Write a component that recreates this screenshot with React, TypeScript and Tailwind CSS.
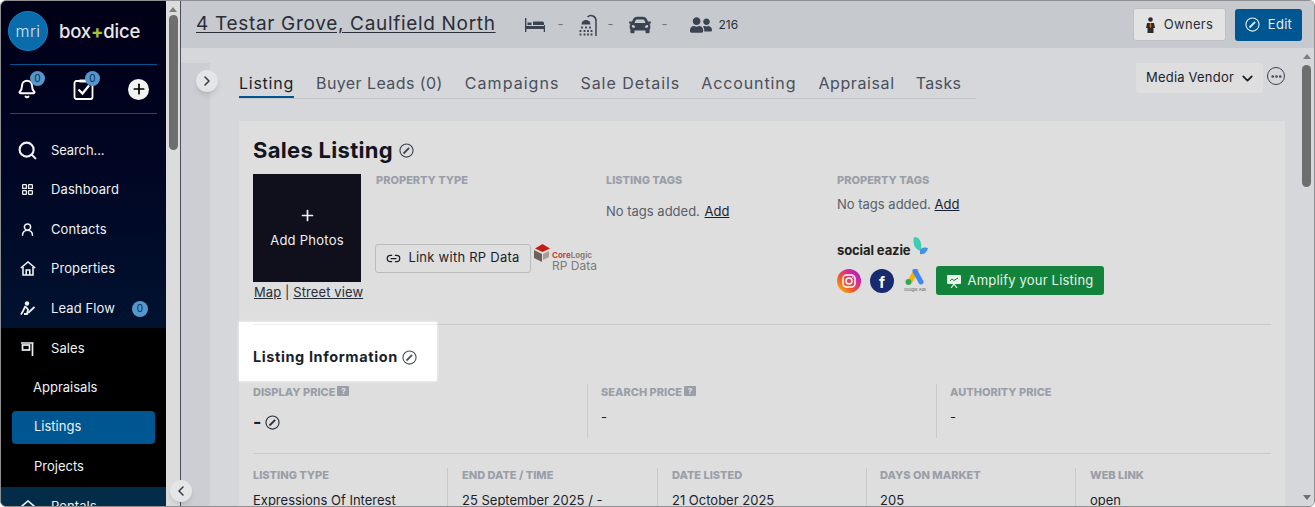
import { Bell, Plus, Search, LayoutGrid, UserRound, Link2, ChevronRight, ChevronLeft, ChevronDown, Ellipsis } from 'lucide-react';
import { FaCar, FaUserFriends } from 'react-icons/fa';

function EditCircle({ size = 16, className = '' }: { size?: number; className?: string }) {
  return (
    <svg width={size} height={size} viewBox="0 0 16 16" fill="none" stroke="currentColor" className={className}>
      <circle cx="8" cy="8" r="7" strokeWidth="1.2" />
      <path d="M4.800 11.200 10.800 5.200" strokeWidth="1.900" />
    </svg>
  );
}

function HomeIcon() {
  return (
    <svg width="16" height="15" viewBox="0 0 16 15" fill="none" stroke="currentColor" strokeWidth="1.600">
      <path d="M.8 7 8 1l7.200 6" />
      <path d="M3 6v8h10V6M6.200 14V9h3.600v5" />
    </svg>
  );
}

function Badge({ className = '' }: { className?: string }) {
  return (
    <span className={`flex h-[15px] w-[15px] items-center justify-center rounded-full bg-[#5597cc] text-[10px] text-[#0b2a4a] ${className}`}>0</span>
  );
}

function NavItem({ label, icon, badge }: { label: string; icon: React.ReactNode; badge?: boolean }) {
  return (
    <div className="flex h-[39.6px] items-center text-[13px] tracking-[0.1px] text-[#eef1f5]">
      <span className="flex w-[50px] justify-center pl-[5px] pr-[2px]">{icon}</span>
      <span>{label}</span>
      {badge && <Badge className="ml-[17px] !h-[16px] !w-[16px]" />}
    </div>
  );
}

function Label({ children, help }: { children: string; help?: boolean }) {
  return (
    <div className="flex items-center text-[11px] font-extrabold leading-[14px] uppercase text-[#9a9ea8]">
      {children}
      {help && (
        <span className="relative mb-[2px] ml-[2px] flex h-[10px] w-[12px] items-center justify-center rounded-[1px] bg-[#9a9ea8] text-[8px] text-[#dedede]">?</span>
      )}
    </div>
  );
}

function Cell({ label, value, className = '' }: { label: string; value: string; className?: string }) {
  return (
    <div className={`border-l border-[#c8c9cc] pl-[14px] ${className}`}>
      <Label>{label}</Label>
      <div className="mt-[10px] whitespace-nowrap text-[13px] leading-[16px] text-[#1b1f2b]">{value}</div>
    </div>
  );
}

export default function App() {
  return (
    <div className="flex h-[507px] w-[1315px] overflow-hidden rounded-[6px] border border-[#8d8f93] bg-[#dcdcdc] font-[Inter,sans-serif]">
      {/* Sidebar */}
      <aside className="flex w-[165px] shrink-0 flex-col overflow-hidden bg-gradient-to-b from-[#000016] to-[#00203f]">
        <div className="flex h-[63px] shrink-0 items-center gap-[11px] pl-[7px]">
          <div className="-mt-[3px] flex h-[40px] w-[40px] items-center justify-center rounded-full border border-[#1583c4] bg-[#0b6cab] text-[16px] font-light tracking-[0.4px] text-[#d6e7f2]">
            mri
          </div>
          <div className="-mt-[2px] text-[18.5px] font-medium tracking-[-0.2px] text-[#e8e8e8]">
            box<span className="font-bold text-[#a6c531]">+</span>dice
          </div>
        </div>
        <div className="mx-[9px] flex h-[50px] shrink-0 items-center border-y border-[#005691] pl-[7px]">
          <div className="relative">
            <Bell size={20} strokeWidth={2.4} className="text-white" />
            <Badge className="absolute -right-[8px] -top-[8px]" />
          </div>
          <div className="relative ml-[36px]">
            <svg width="21" height="22" viewBox="0 0 21 22" fill="none">
              <rect x="1.500" y="3" width="18" height="18" rx="2" stroke="#fff" strokeWidth="1.800" />
              <path d="M6.500 1.500h8v3h-8z" fill="#fff" />
              <path d="M5.500 11.500 9.500 15.500 16 7.500" stroke="#fff" strokeWidth="2.200" />
            </svg>
            <Badge className="absolute -right-[6px] -top-[7px]" />
          </div>
          <div className="ml-[34px] flex h-[21px] w-[21px] items-center justify-center rounded-full bg-[#f2f2f2]">
            <Plus size={16} strokeWidth={2.6} className="text-black" />
          </div>
        </div>
        <div className="flex h-[71px] shrink-0 items-center pt-[2px] text-[13px] tracking-[-0.1px] text-[#eef1f5]">
          <span className="flex w-[50px] justify-center pl-[3px]">
            <Search size={21} strokeWidth={2.4} />
          </span>
          Search...
        </div>
        <div className="-mt-[15px]">
          <NavItem label="Dashboard" icon={<LayoutGrid size={13} strokeWidth={2.4} />} />
          <NavItem label="Contacts" icon={<UserRound size={15} strokeWidth={2.4} />} />
          <NavItem label="Properties" icon={<HomeIcon />} />
          <NavItem
            label="Lead Flow"
            badge
            icon={
              <svg width="15" height="15" viewBox="0 0 15 15" fill="none" stroke="currentColor" strokeWidth="1.800">
                <circle cx="7" cy="2.500" r="2.200" fill="currentColor" stroke="none" />
                <path d="M5.500 5 3 10l-2 3.500M5.500 5.500 8 8.500l-1 4.500h-3" />
                <path d="M8 12 14.500 6" />
              </svg>
            }
          />
        </div>
        <div className="h-[159px] shrink-0 bg-black pt-[1px]">
          <NavItem
            label="Sales"
            icon={
              <svg width="13" height="14" viewBox="0 0 13 14" fill="none" stroke="currentColor" strokeWidth="1.700">
                <path d="M0 1h12.500M11.500 1v13" />
                <rect x="1.500" y="3" width="7" height="5" />
              </svg>
            }
          />
          <div className="-mt-[1px] flex h-[39.6px] items-center pl-[32px] text-[13px] text-[#eef1f5]">Appraisals</div>
          <div className="mx-[11px] my-[3px] flex h-[33px] items-center rounded-[4px] bg-[#005691] pl-[22px] text-[13px] text-[#eef1f5]">Listings</div>
          <div className="flex h-[39.6px] items-center pl-[33px] text-[13px] text-[#eef1f5]">Projects</div>
        </div>
        <div className="flex-1 bg-[#022c47]">
          <NavItem label="Rentals" icon={<HomeIcon />} />
        </div>
      </aside>

      {/* Sidebar scrollbar */}
      <div className="flex w-[14px] shrink-0 flex-col items-center bg-[#dcdcdc] pt-[6px]">
        <div className="h-0 w-0 border-x-[4px] border-b-[5px] border-x-transparent border-b-[#7d7d7d]" />
        <div className="mt-[3px] h-[135px] w-[9px] rounded-full bg-[#6e6e6e]" />
      </div>

      {/* Main */}
      <main className="relative flex min-w-0 flex-1 flex-col border-l border-[#4a4f5c] bg-[#d5d7da]">
        <button className="absolute -left-[11px] top-[479px] z-10 flex h-[22px] w-[22px] items-center justify-center rounded-full bg-[#e4e5e7] text-[#3b3f4a] shadow-md">
          <ChevronLeft size={16} strokeWidth={2.4} />
        </button>

        <header className="flex h-[47px] shrink-0 items-center bg-[#c6c9ce] pl-[15px] pr-[12px]">
          <a className="text-[19px] tracking-[0.68px] text-[#2a2e39] underline underline-offset-2">4 Testar Grove, Caulfield North</a>
          <div className="ml-[29px] flex items-center text-[#3b4250]">
            <svg width="20" height="14" viewBox="0 0 20 14" fill="currentColor">
              <path d="M0 0h1.400v8H19V5.500C19 4 18 3.500 17 3.500H8V7H2.500V4.500h4V7H20V14h-1.300v-3H1.400v3H0z" />
            </svg>
            <span className="ml-[13px] text-[13px] text-[#6f7480]">-</span>
            <svg className="ml-[15px]" width="19" height="22" viewBox="0 0 19 22" fill="none" stroke="currentColor">
              <path d="M17 22V6.500A5 5 0 0 0 8.500 3" strokeWidth="1.500" />
              <path d="M2.500 10.500a4.500 4.500 0 0 1 9 0z" fill="currentColor" stroke="none" />
              <path d="M3 12.500v2M7 12.500v2M11 12.500v2M1.500 16v2M5.500 16v2M9 16v2M12.500 16v2M1.500 19.500v2M5.500 19.500v2M9 19.500v2M12.500 19.500v2" strokeWidth="1.800" />
            </svg>
            <span className="ml-[10px] text-[13px] text-[#6f7480]">-</span>
            <FaCar size={22} className="ml-[15px]" />
            <span className="ml-[11px] text-[13px] text-[#6f7480]">-</span>
            <FaUserFriends size={22} className="ml-[22px]" />
            <span className="ml-[7px] text-[12px] text-[#2a2e39]">216</span>
          </div>
          <button className="ml-auto flex h-[33px] w-[93px] items-center justify-center gap-[9px] rounded-[3px] border border-[#bfc1c5] bg-[#e3e3e3] text-[13px] tracking-[0.3px] text-[#2a2e39]">
            <svg width="9" height="16" viewBox="0 0 9 16" fill="#2e2a28">
              <circle cx="4.500" cy="2.500" r="2.300" />
              <path d="M1 6h7l1 5H7.500v5h-6v-5H0z" />
              <path d="M4 6h1l.4 4-.9 1-.9-1z" fill="#c0722c" />
            </svg>
            Owners
          </button>
          <button className="ml-[9px] flex h-[32px] w-[67px] items-center justify-center gap-[8px] rounded-[3px] bg-[#005691] text-[13px] tracking-[0.3px] text-[#e8eef4]">
            <EditCircle size={15} />
            Edit
          </button>
        </header>

        <div className="flex min-h-0 flex-1">
          {/* Left strip */}
          <div className="relative w-[29px] shrink-0 pt-[15px]">
            <div className="h-full bg-[#ccced3]" />
            <button className="absolute left-[15px] top-[22px] flex h-[22px] w-[22px] items-center justify-center rounded-full bg-[#e4e5e7] text-[#3b3f4a] shadow-md">
              <ChevronRight size={16} strokeWidth={2.4} />
            </button>
          </div>

          {/* Page content */}
          <div className="min-w-0 flex-1 overflow-hidden pl-[29px] pt-[15px]">
            <div className="flex items-start">
              <nav className="flex w-[737px] border-b border-[#c3c5c9] text-[16px] text-[#4a4f5c]">
                <a className="h-[35px] border-b-2 border-[#005691] pt-[8px] tracking-[0.75px] text-[#1b1f2b]">Listing</a>
                <a className="ml-[22px] pt-[8px] tracking-[0.42px]">Buyer Leads (0)</a>
                <a className="ml-[22px] pt-[8px] tracking-[1.05px]">Campaigns</a>
                <a className="ml-[21px] pt-[8px] tracking-[0.95px]">Sale Details</a>
                <a className="ml-[21px] pt-[8px] tracking-[0.9px]">Accounting</a>
                <a className="ml-[22px] pt-[8px] tracking-[0.6px]">Appraisal</a>
                <a className="ml-[21px] pt-[8px] tracking-[0.4px]">Tasks</a>
              </nav>
              <div className="ml-[160px] flex h-[30px] w-[127px] items-center gap-[5px] rounded-[3px] bg-[#dedede] pl-[10px] text-[13px] tracking-[0.2px] text-[#1b1f2b]">
                Media Vendor
                <ChevronDown size={17} strokeWidth={2.6} />
              </div>
              <span className="ml-[4px] mt-[4px] flex h-[18px] w-[18px] items-center justify-center rounded-full border border-[#3b4250] text-[#3b4250]">
                <Ellipsis size={13} strokeWidth={3} />
              </span>
            </div>

            <section className="relative mt-[22px] w-[1046px] bg-[#dedede] px-[14px] pt-[14px]">
              <h1 className="flex h-[30px] items-center gap-[6px] text-[22px] font-bold tracking-[0.3px] text-[#12151f]">
                Sales Listing
                <EditCircle size={15} className="text-[#3b4250]" />
              </h1>

              <div className="mt-[9px] flex h-[150px]">
                <div className="w-[110px] shrink-0">
                  <div className="flex h-[108px] w-[108px] flex-col items-center justify-center bg-[#10101c] pt-[2px] text-[13px] tracking-[0.25px] text-[#eef1f5]">
                    <Plus size={17} strokeWidth={2.4} />
                    <span className="mt-[7px]">Add Photos</span>
                  </div>
                  <div className="mt-[1px] whitespace-nowrap pl-[1px] text-[13px] leading-[18px] tracking-[0.1px] text-[#2a2e39]">
                    <u>Map</u> | <u>Street view</u>
                  </div>
                </div>
                <div className="-mt-[1px] ml-[13px] w-[230px] shrink-0">
                  <Label>PROPERTY TYPE</Label>
                  <div className="-ml-[1px] mt-[56px] flex items-center">
                    <button className="flex h-[29px] w-[156px] items-center justify-center gap-[7px] rounded-[3px] border border-[#b9bbbf] text-[13px] tracking-[0.25px] text-[#1b1f2b]">
                      <Link2 size={15} />
                      Link with RP Data
                    </button>
                    <div className="ml-[3px] mt-[1px]">
                      <div className="flex items-center">
                        <svg width="17" height="18" viewBox="0 0 17 18">
                          <path d="M8.500 0 16 4.500 8.500 8 1 4.500z" fill="#c21f14" />
                          <path d="M0 6l8 4v8l-8-4z" fill="#6c625a" />
                          <path d="M9 10l6-3v6l-6 3z" fill="#a89e95" />
                        </svg>
                        <span className="ml-[1px] mt-[3px] text-[8px] font-bold text-[#c4443a]">Core<span className="text-[#8a8078]">Logic</span></span>
                      </div>
                      <div className="-mt-[3px] pl-[18px] text-[12px] leading-[14px] text-[#7f7a75]">RP Data</div>
                    </div>
                  </div>
                </div>
                <div className="-mt-[1px] w-[231px] shrink-0">
                  <Label>LISTING TAGS</Label>
                  <div className="mt-[15px] text-[13px] leading-[18px] text-[#5a5f6b]">
                    No tags added. <u className="ml-[1px] text-[#1b1f2b]">Add</u>
                  </div>
                </div>
                <div className="-mt-[1px]">
                  <Label>PROPERTY TAGS</Label>
                  <div className="mt-[8px] text-[13px] leading-[18px] text-[#5a5f6b]">
                    No tags added. <u className="text-[#1b1f2b]">Add</u>
                  </div>
                  <div className="mt-[24px] flex h-[22px] items-end">
                    <div className="relative text-[13px] font-bold leading-[17px] tracking-[-0.1px] text-[#222]">social eazie</div>
                    <svg className="mb-[3px]" width="17" height="19" viewBox="0 0 17 19">
                      <path d="M3 0c6 0 8 5 7 14C5 13 1 8 3 0z" fill="#3ecdb4" />
                      <path d="M9 13c2-3 5-3 8-2-1 4-4 7-8 6z" fill="#3f93e0" />
                    </svg>
                  </div>
                  <div className="mt-[7px] flex items-center">
                    <svg width="24" height="24" viewBox="0 0 24 24">
                      <defs>
                        <linearGradient id="ig" x1="0" y1="1" x2="1" y2="0">
                          <stop offset="0" stopColor="#fdc70c" />
                          <stop offset=".4" stopColor="#f0542d" />
                          <stop offset=".7" stopColor="#d6249f" />
                          <stop offset="1" stopColor="#8a2bc2" />
                        </linearGradient>
                      </defs>
                      <circle cx="12" cy="12" r="12" fill="url(#ig)" />
                      <rect x="6" y="6" width="12" height="12" rx="3.500" fill="none" stroke="#fff" strokeWidth="1.500" />
                      <circle cx="12" cy="12" r="3" fill="none" stroke="#fff" strokeWidth="1.500" />
                      <circle cx="15.700" cy="8.300" r=".8" fill="#fff" />
                    </svg>
                    <span className="ml-[9px] flex h-[24px] w-[24px] items-end justify-center rounded-full bg-[#172b6e] text-[15px] font-bold leading-[21px] text-white">f</span>
                    <div className="ml-[10px] flex w-[22px] flex-col items-center">
                      <svg width="20" height="17" viewBox="0 0 20 17">
                        <path d="M7 1.500 2 11" stroke="#f4b400" strokeWidth="5" strokeLinecap="round" transform="translate(4 0)" />
                        <path d="M10 2 16 13" stroke="#4285f4" strokeWidth="5" strokeLinecap="round" />
                        <circle cx="3.500" cy="13" r="3" fill="#34a853" />
                      </svg>
                      <span className="mt-[1px] whitespace-nowrap text-[4px] leading-[5px] text-[#555]">Google Ads</span>
                    </div>
                    <button className="ml-[10px] flex h-[29px] w-[168px] items-center justify-center gap-[7px] rounded-[3px] bg-[#13833b] text-[13px] tracking-[0.2px] text-[#e8f2ea]">
                      <svg width="14" height="14" viewBox="0 0 14 14" fill="none">
                        <rect x="0" y="1" width="14" height="9" rx="1" fill="#e8f2ea" />
                        <path d="M3 7l2-2 2 1.500L11 4" stroke="#13833b" strokeWidth="1" />
                        <path d="M4 14l3-4 3 4" stroke="#e8f2ea" strokeWidth="1.200" />
                      </svg>
                      Amplify your Listing
                    </button>
                  </div>
                </div>
              </div>

              <hr className="border-[#c8c9cc]" />

              {/* spotlight from the guided tour */}
              <div className="absolute left-0 top-[201px] h-[59px] w-[198px] bg-white pl-[14px] pt-[2px] shadow-[0_0_3px_rgba(255,255,255,0.8)]">
                <div className="h-px bg-[#efefef]" />
              </div>
              <h2 className="relative mt-[23px] flex h-[18px] items-center gap-[4px] whitespace-nowrap text-[14.5px] font-bold tracking-[0.6px] text-[#1b1f2b]">
                Listing Information
                <EditCircle size={15} className="text-[#4a4f5c]" />
              </h2>

              <div className="mt-[18px] grid h-[54px] grid-cols-[334px_349px_1fr]">
                <div className="pt-[1px]">
                  <Label help>DISPLAY PRICE</Label>
                  <div className="mt-[12px] flex items-center gap-[4px] text-[18px] font-bold leading-[22px] text-[#1b1f2b]">
                    -
                    <EditCircle size={15} className="text-[#2a2e39]" />
                  </div>
                </div>
                <div className="border-l border-[#c8c9cc] pl-[13px] pt-[1px]">
                  <Label help>SEARCH PRICE</Label>
                  <div className="mt-[10px] text-[13px] leading-[16px] text-[#1b1f2b]">-</div>
                </div>
                <div className="border-l border-[#c8c9cc] pl-[13px] pt-[1px]">
                  <Label>AUTHORITY PRICE</Label>
                  <div className="mt-[10px] text-[13px] leading-[16px] text-[#1b1f2b]">-</div>
                </div>
              </div>

              <hr className="mt-[15px] border-[#c8c9cc]" />

              <div className="mt-[14px] grid grid-cols-[194px_210px_209px_209px_1fr]">
                <div>
                  <Label>LISTING TYPE</Label>
                  <div className="mt-[10px] whitespace-nowrap text-[13px] leading-[16px] text-[#1b1f2b]">Expressions Of Interest</div>
                </div>
                <Cell label="END DATE / TIME" value="25 September 2025 / -" />
                <Cell label="DATE LISTED" value="21 October 2025" />
                <Cell label="DAYS ON MARKET" value="205" className="!pl-[13px]" />
                <Cell label="WEB LINK" value="open" />
              </div>
            </section>
          </div>

          {/* Page scrollbar */}
          <div className="flex w-[15px] shrink-0 flex-col items-center pt-[6px]">
            <div className="h-0 w-0 border-x-[4px] border-b-[5px] border-x-transparent border-b-[#7d7d7d]" />
            <div className="mt-[6px] h-[122px] w-[9px] rounded-full bg-[#6e6e6e]" />
            <div className="mb-[6px] mt-auto h-0 w-0 border-x-[4px] border-t-[5px] border-x-transparent border-t-[#6e6e6e]" />
          </div>
        </div>
      </main>
    </div>
  );
}
